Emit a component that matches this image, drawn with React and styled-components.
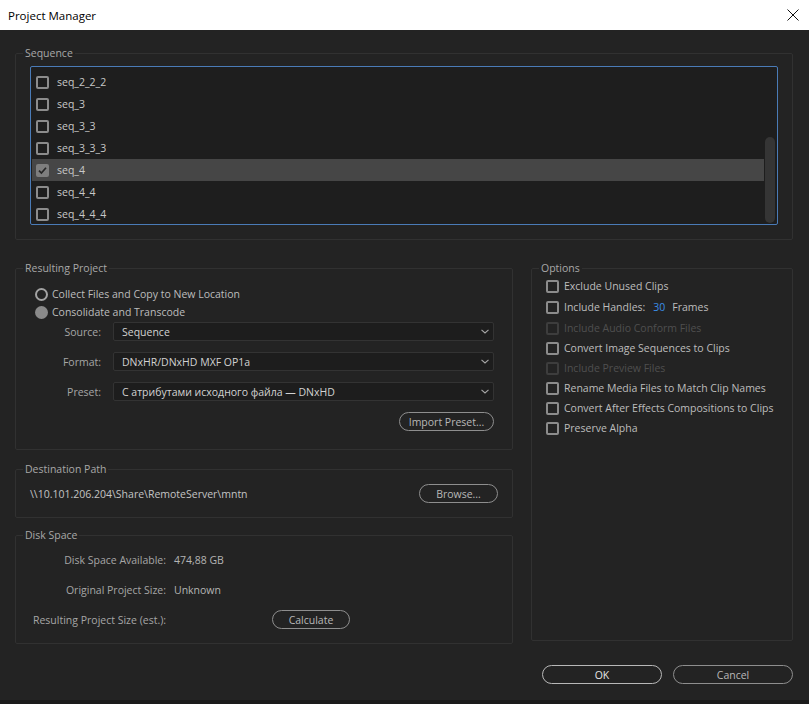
import React from "react";
import styled, { createGlobalStyle, css } from "styled-components";

const GlobalStyle = createGlobalStyle`
  html, body {
    margin: 0;
    padding: 0;
    background: #232323;
  }
  body {
    font-family: "Open Sans", "Noto Sans", sans-serif;
    font-size: 10.5px;
    color: #c4c4c4;
  }
  * { box-sizing: border-box; }
`;

const Window = styled.div`
  width: 809px;
  height: 704px;
  display: flex;
  flex-direction: column;
  background: #232323;
  border-bottom: 4px solid #1b1b1b;
  overflow: hidden;
`;

const TitleBar = styled.div`
  height: 30px;
  flex: none;
  background: #ffffff;
  display: flex;
  align-items: center;
  justify-content: space-between;
  padding: 0 10px 0 8px;
  color: #000;
  font-size: 11.5px;
`;

const CloseButton = styled.div`
  width: 12px;
  height: 12px;
  display: flex;
`;

const Body = styled.div`
  flex: 1;
  padding: 16px 16px 0 15px;
  display: flex;
  flex-direction: column;
`;

const Group = styled.fieldset`
  margin: 0 0 ${(p) => p.$mb || 0}px 0;
  padding: ${(p) => p.$pad};
  border: 1px solid #313131;
  border-radius: 2px;
  min-width: 0;
`;

const Legend = styled.legend`
  padding: 0 2px;
  margin-left: ${(p) => p.$ml}px;
  line-height: 14px;
  color: #a8a8a8;
`;

const List = styled.div`
  height: 159px;
  border: 1px solid #4a7bb7;
  border-radius: 2px;
  background: #1e1e1e;
  display: flex;
  overflow: hidden;
`;

const Rows = styled.div`
  flex: 1;
  padding: 4px 0 0 1px;
`;

const Row = styled.div`
  height: 22px;
  display: flex;
  align-items: center;
  gap: 8px;
  padding-left: 4px;
  color: #c8c8c8;
  background: ${(p) => (p.$selected ? "#464646" : "transparent")};
`;

const Track = styled.div`
  width: 13px;
  display: flex;
  flex-direction: column;
  justify-content: flex-end;
  padding: 0 2px 1px 1px;
`;

const Thumb = styled.div`
  height: 86px;
  border-radius: 5px;
  background: #353535;
`;

const Box = styled.span`
  width: 13px;
  height: 13px;
  flex: none;
  border: 2px solid ${(p) => (p.$disabled ? "#3d3d3d" : "#8c8c8c")};
  border-radius: 2px;
  display: flex;
  align-items: center;
  justify-content: center;
  ${(p) =>
    p.$checked &&
    css`
      background: #7e7e7e;
      border-color: #7e7e7e;
    `}
`;

const CheckBox = ({ checked, disabled }) => (
  <Box $checked={checked} $disabled={disabled}>
    {checked && (
      <svg width="9" height="9" viewBox="0 0 9 9">
        <path d="M1 4.6 L3.4 7 L8 1.8" fill="none" stroke="#262626" strokeWidth="1.7" />
      </svg>
    )}
  </Box>
);

const Lower = styled.div`
  display: grid;
  grid-template-columns: 498px 262px;
  column-gap: 18px;
`;

const Column = styled.div`
  display: flex;
  flex-direction: column;
`;

const RadioRow = styled.div`
  height: 18px;
  display: flex;
  align-items: center;
  gap: 4px;
  color: #bdbdbd;
`;

const Radio = styled.span`
  width: 13px;
  height: 13px;
  border-radius: 50%;
  flex: none;
  ${(p) =>
    p.$on
      ? css`
          background: #8a8a8a;
        `
      : css`
          border: 2px solid #a3a3a3;
        `}
`;

const Form = styled.div`
  margin-top: 1px;
  display: grid;
  grid-template-columns: 66px 381px;
  grid-auto-rows: 19px;
  column-gap: 12px;
  row-gap: 11px;
  align-items: center;
`;

const Label = styled.span`
  text-align: right;
  color: #a6a6a6;
`;

const Select = styled.div`
  height: 19px;
  background: #1d1d1d;
  border: 1px solid #333;
  border-radius: 2px;
  display: flex;
  align-items: center;
  justify-content: space-between;
  padding: 0 4px 0 8px;
  color: #d2d2d2;
`;

const Chevron = () => (
  <svg width="8" height="5" viewBox="0 0 8 5">
    <path d="M0.5 0.8 L4 4 L7.5 0.8" fill="none" stroke="#a8a8a8" strokeWidth="1.1" />
  </svg>
);

const PillButton = styled.button`
  height: 19px;
  width: ${(p) => p.$w}px;
  margin-left: ${(p) => p.$ml || 0}px;
  justify-self: ${(p) => p.$justify || "auto"};
  border: 1px solid ${(p) => (p.$bright ? "#b8b8b8" : "#8e8e8e")};
  border-radius: 10px;
  background: transparent;
  color: ${(p) => (p.$bright ? "#e6e6e6" : "#b8b8b8")};
  font: inherit;
  padding: 0;
  display: flex;
  align-items: center;
  justify-content: center;
`;

const PathRow = styled.div`
  height: 19px;
  display: flex;
  align-items: center;
  justify-content: space-between;
  color: #c4c4c4;
`;

const Stats = styled.div`
  display: grid;
  grid-template-columns: 135px auto;
  grid-auto-rows: 19px;
  column-gap: 8px;
  row-gap: 11px;
  align-items: center;
`;

const StatLabel = styled.span`
  text-align: right;
  color: #a6a6a6;
  white-space: nowrap;
`;

const StatValue = styled.span`
  color: #b4b4b4;
  display: flex;
`;

const OptionRow = styled.div`
  height: ${(p) => p.$h || 20}px;
  display: flex;
  align-items: center;
  gap: 5px;
  white-space: nowrap;
  color: ${(p) => (p.$disabled ? "#4f4f4f" : "#bdbdbd")};
`;

const Num = styled.span`
  color: #3a8ee8;
  margin: 0 2px 0 3px;
`;

const Footer = styled.div`
  padding-top: 21px;
  display: flex;
  justify-content: flex-end;
  gap: 11px;
`;

const sequences = ["seq_2_2_2", "seq_3", "seq_3_3", "seq_3_3_3", "seq_4", "seq_4_4", "seq_4_4_4"];

const options = [
  { label: "Exclude Unused Clips" },
  { label: "Include Handles:", handles: true },
  { label: "Include Audio Conform Files", disabled: true },
  { label: "Convert Image Sequences to Clips" },
  { label: "Include Preview Files", disabled: true },
  { label: "Rename Media Files to Match Clip Names" },
  { label: "Convert After Effects Compositions to Clips" },
  { label: "Preserve Alpha" },
];

export default function App() {
  return (
    <>
      <GlobalStyle />
      <Window>
        <TitleBar>
          <span>Project Manager</span>
          <CloseButton>
            <svg width="12" height="12" viewBox="0 0 12 12">
              <path d="M0.5 0.5 L11.5 11.5 M11.5 0.5 L0.5 11.5" stroke="#111" strokeWidth="1" />
            </svg>
          </CloseButton>
        </TitleBar>
        <Body>
          <Group $pad="6px 14px 14px 14px" $mb={21}>
            <Legend $ml={-7}>Sequence</Legend>
            <List>
              <Rows>
                {sequences.map((s) => (
                  <Row key={s} $selected={s === "seq_4"}>
                    <CheckBox checked={s === "seq_4"} />
                    {s}
                  </Row>
                ))}
              </Rows>
              <Track>
                <Thumb />
              </Track>
            </List>
          </Group>

          <Lower>
            <Column>
              <Group $pad="10px 18px 18px 19px" $mb={12}>
                <Legend $ml={-12}>Resulting Project</Legend>
                <RadioRow>
                  <Radio />
                  Collect Files and Copy to New Location
                </RadioRow>
                <RadioRow>
                  <Radio $on />
                  Consolidate and Transcode
                </RadioRow>
                <Form>
                  <Label>Source:</Label>
                  <Select>
                    Sequence
                    <Chevron />
                  </Select>
                  <Label>Format:</Label>
                  <Select>
                    DNxHR/DNxHD MXF OP1a
                    <Chevron />
                  </Select>
                  <Label>Preset:</Label>
                  <Select>
                    С атрибутами исходного файла — DNxHD
                    <Chevron />
                  </Select>
                  <span />
                  <PillButton $w={95} $justify="end">Import Preset...</PillButton>
                </Form>
              </Group>

              <Group $pad="8px 14px 14px 14px" $mb={10}>
                <Legend $ml={-7}>Destination Path</Legend>
                <PathRow>
                  \\10.101.206.204\Share\RemoteServer\mntn
                  <PillButton $w={79}>Browse...</PillButton>
                </PathRow>
              </Group>

              <Group $pad="8px 15px 14px 15px">
                <Legend $ml={-8}>Disk Space</Legend>
                <Stats>
                  <StatLabel>Disk Space Available:</StatLabel>
                  <StatValue>474,88 GB</StatValue>
                  <StatLabel>Original Project Size:</StatLabel>
                  <StatValue>Unknown</StatValue>
                  <StatLabel>Resulting Project Size (est.):</StatLabel>
                  <StatValue>
                    <PillButton $w={78} $ml={98}>Calculate</PillButton>
                  </StatValue>
                </Stats>
              </Group>
            </Column>

            <Group $pad="1px 14px 10px 14px" $mb={3}>
              <Legend $ml={-7}>Options</Legend>
              {options.map((o) => (
                <OptionRow key={o.label} $disabled={o.disabled} $h={o.handles ? 22 : 20}>
                  <CheckBox disabled={o.disabled} />
                  {o.label}
                  {o.handles && (
                    <>
                      <Num>30</Num>
                      Frames
                    </>
                  )}
                </OptionRow>
              ))}
            </Group>
          </Lower>

          <Footer>
            <PillButton $w={120} $bright>OK</PillButton>
            <PillButton $w={120}>Cancel</PillButton>
          </Footer>
        </Body>
      </Window>
    </>
  );
}
